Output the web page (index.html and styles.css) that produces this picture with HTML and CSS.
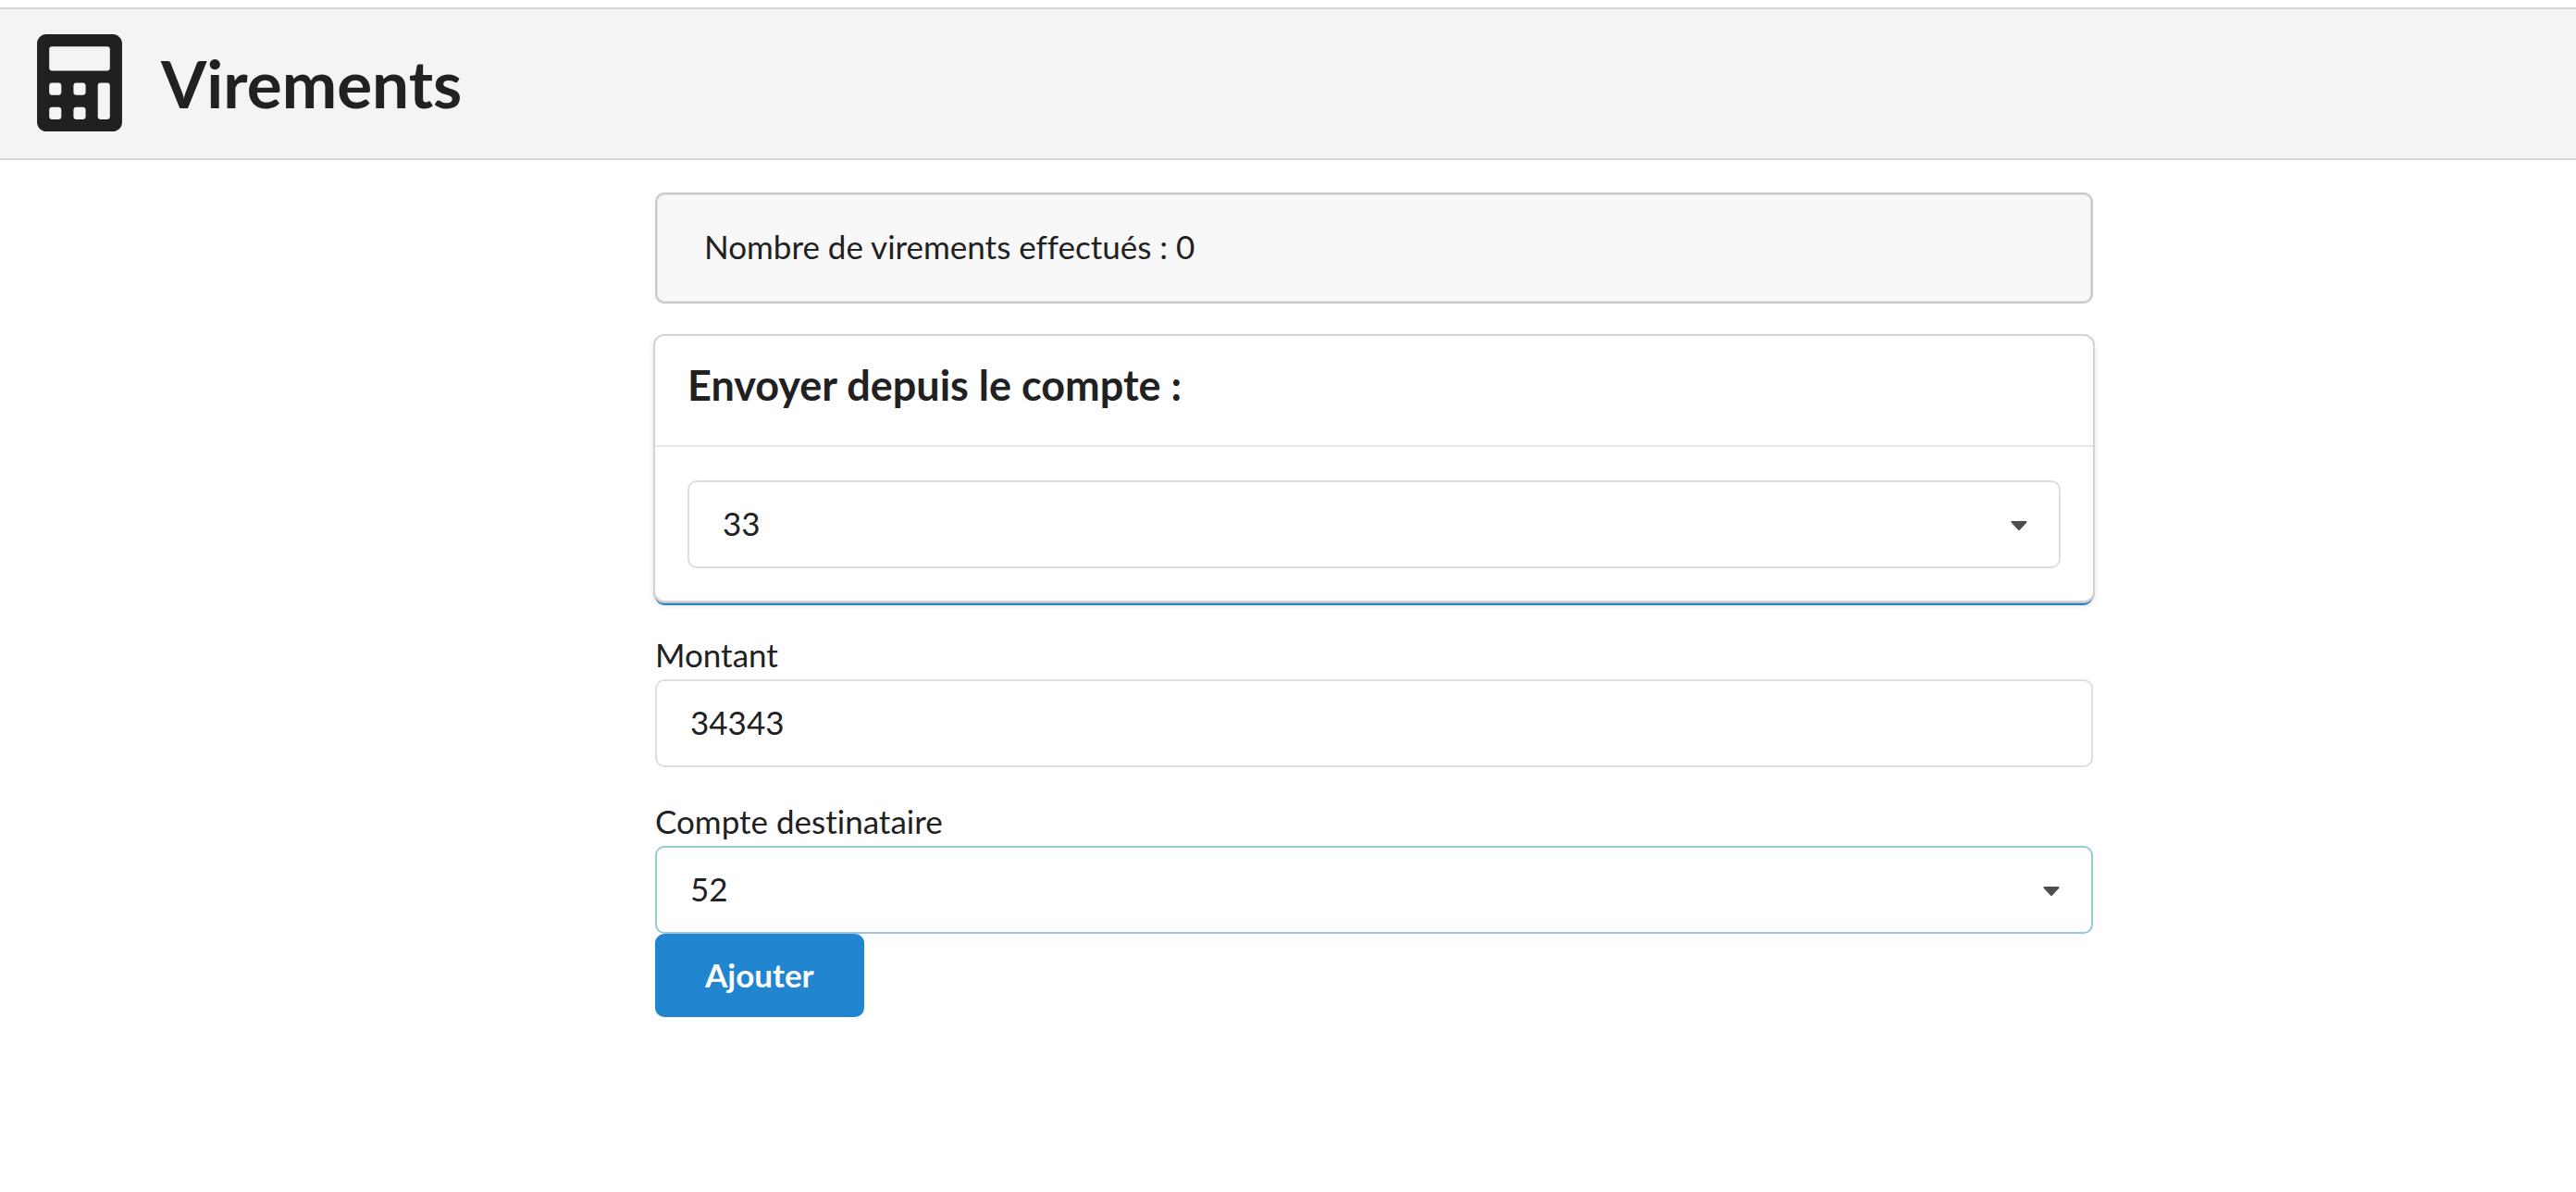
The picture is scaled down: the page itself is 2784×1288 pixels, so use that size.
FILE: index.html
```html
<!DOCTYPE html>
<html lang="fr">
<head>
  <meta charset="utf-8">
  <meta name="viewport" content="width=device-width, initial-scale=1">
  <title>Virements</title>
  <link rel="stylesheet" href="styles.css">
</head>
<body>
  <header class="page-header">
    <svg class="page-icon" viewBox="0 0 448 512" aria-hidden="true">
      <path fill="currentColor" d="M400 0H48C22.400 0 0 22.400 0 48v416c0 25.600 22.400 48 48 48h352c25.600 0 48-22.400 48-48V48c0-25.600-22.400-48-48-48zM128 435.200c0 6.400-6.400 12.800-12.800 12.800H76.800c-6.400 0-12.800-6.400-12.800-12.800v-38.400c0-6.400 6.400-12.800 12.800-12.800h38.400c6.400 0 12.800 6.400 12.800 12.800v38.400zm0-128c0 6.400-6.400 12.800-12.800 12.800H76.800c-6.400 0-12.800-6.400-12.800-12.800v-38.400c0-6.400 6.400-12.800 12.800-12.800h38.400c6.400 0 12.800 6.400 12.800 12.800v38.400zm128 128c0 6.400-6.400 12.800-12.800 12.800h-38.400c-6.400 0-12.800-6.400-12.800-12.800v-38.400c0-6.400 6.400-12.800 12.800-12.800h38.400c6.400 0 12.800 6.400 12.800 12.800v38.400zm0-128c0 6.400-6.400 12.800-12.800 12.800h-38.400c-6.400 0-12.800-6.400-12.800-12.800v-38.400c0-6.400 6.400-12.800 12.800-12.800h38.400c6.400 0 12.800 6.400 12.800 12.800v38.400zm128 128c0 6.400-6.400 12.800-12.800 12.800h-38.400c-6.400 0-12.800-6.400-12.800-12.800V268.800c0-6.400 6.400-12.800 12.800-12.800h38.400c6.400 0 12.800 6.400 12.800 12.800v166.400zm0-256c0 6.400-6.400 12.800-12.800 12.800H76.800c-6.400 0-12.800-6.400-12.800-12.800V76.800C64 70.400 70.400 64 76.800 64h294.400c6.400 0 12.800 6.400 12.800 12.800v102.400z"/>
    </svg>
    <h1 class="page-title">Virements</h1>
  </header>

  <div class="grid">
    <main class="content">
      <p class="message">Nombre de virements effectués : 0</p>

      <form class="form">
        <section class="card">
          <h2 class="card-title"><label for="source">Envoyer depuis le compte :</label></h2>
          <div class="card-body">
            <div class="dropdown">
              <select class="control" id="source">
                <option selected>33</option>
                <option>52</option>
              </select>
              <svg class="caret" viewBox="0 0 18 10" aria-hidden="true"><path fill="currentColor" d="M1 0h16q1 1 0 2L10 9.500q-1 1-2 0L1 2q-1-1 0-2z"/></svg>
            </div>
          </div>
        </section>

        <div class="field">
          <label class="label" for="amount">Montant</label>
          <input class="control" id="amount" type="text" inputmode="numeric" value="34343">
        </div>

        <div class="field">
          <label class="label" for="target">Compte destinataire</label>
          <div class="dropdown">
            <select class="control control-active" id="target">
              <option>33</option>
              <option selected>52</option>
            </select>
            <svg class="caret" viewBox="0 0 18 10" aria-hidden="true"><path fill="currentColor" d="M1 0h16q1 1 0 2L10 9.500q-1 1-2 0L1 2q-1-1 0-2z"/></svg>
          </div>
        </div>

        <button class="button" type="button">Ajouter</button>
      </form>
    </main>
  </div>
</body>
</html>
```

FILE: styles.css
```css
* {
  box-sizing: border-box;
}

body {
  margin: 0;
  padding-top: 8px;
  background: #fff;
  color: #212121;
  font-family: Lato, "Liberation Sans", sans-serif;
  font-size: 35px;
  line-height: 50px;
  font-variant-ligatures: none;
}

.page-header {
  display: flex;
  align-items: center;
  gap: 42px;
  padding: 27px 40px 29px;
  border-top: 2px solid #d4d4d5;
  border-bottom: 2px solid #d4d4d5;
  background: #f3f4f6;
  color: #1f2120;
}

.page-icon {
  display: block;
  width: 92px;
  height: 105px;
}

.page-title {
  margin: 0;
  color: #212121;
  font-size: 71px;
  line-height: 90px;
  font-weight: 700;
}

.grid {
  display: grid;
  grid-template-columns: 4fr 9fr 3fr;
}

.content {
  grid-column: 2;
  padding: 35px 0 35px 12px;
}

.message {
  margin: 0 0 35px;
  padding: 33px 53px 37px;
  border-radius: 10px;
  background: #f8f8f9;
  box-shadow: inset 0 0 0 2px #c9cacb, inset 0 0 0 3px #e0e1e2;
}

.form {
  display: flex;
  flex-direction: column;
  align-items: stretch;
}

.card {
  border-radius: 10px;
  background: #fff;
  box-shadow: 0 0 0 2px #d4d4d5, 0 1px 0 2px #a9b0b6, 0 5px 0 0 #2185d0, 0 3px 8px 0 #d4d4d5;
}

.card-title {
  margin: 0;
  padding: 24px 35px 36px;
  border-bottom: 2px solid #e8e8e8;
  font-size: 45px;
  line-height: 58px;
  font-weight: 700;
}

.card-body {
  padding: 36px 35px 35px;
}

.field {
  margin-top: 33px;
}

.label {
  display: block;
  margin-bottom: 2px;
}

.control {
  display: block;
  width: 100%;
  height: 95px;
  margin: 0;
  padding: 0 36px 3px;
  border: 2px solid #dededf;
  border-radius: 10px;
  outline: none;
  appearance: none;
  background: #fff;
  color: inherit;
  font: inherit;
}

.control-active,
.control:focus {
  border-color: #96c8da;
}

.dropdown {
  display: grid;
  align-items: center;
}

.dropdown > * {
  grid-area: 1 / 1;
}

.caret {
  width: 18px;
  height: 10px;
  margin-top: 2px;
  margin-right: 36px;
  justify-self: end;
  color: #4e4e4e;
  pointer-events: none;
}

.button {
  align-self: flex-start;
  height: 90px;
  padding: 0 54px 3px;
  border: 0;
  border-radius: 10px;
  background: #2185d0;
  color: #fff;
  font: inherit;
  font-weight: 700;
}
```
